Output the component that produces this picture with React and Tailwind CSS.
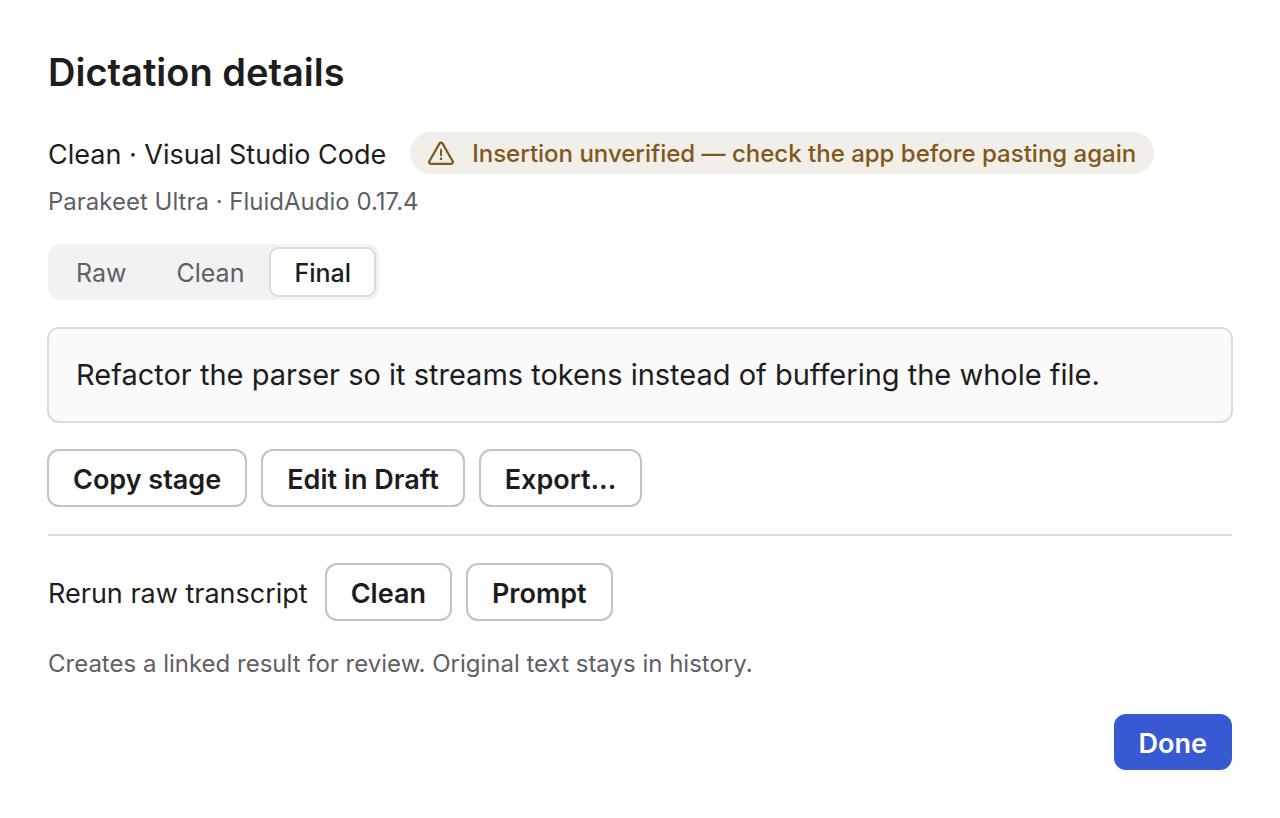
import React, { useState } from "react";

const outline =
  "h-[58px] rounded-[12px] border-2 border-[#c2c2c4] bg-white px-6 pt-1 text-[27px] font-semibold text-[#1d1d20]";

const stages = ["Raw", "Clean", "Final"];

export default function App() {
  const [stage, setStage] = useState("Final");
  return (
    <main className="bg-white px-12 py-12 font-['Inter',sans-serif] text-[#1d1d20]">
      <h1 className="text-[38px] leading-[48px] font-semibold">Dictation details</h1>

      <div className="mt-9 flex items-center gap-6">
        <p className="pt-[3px] text-[27px] leading-[39px]">Clean · Visual Studio Code</p>
        <p className="flex h-[42px] items-center gap-[18px] rounded-full bg-[#f2eee9] px-[18px] text-[24px] font-medium text-[#80591a]">
          <svg className="size-[26px]" viewBox="0 0 26 26" fill="none" stroke="currentColor" strokeWidth="2.2" strokeLinecap="round" strokeLinejoin="round" aria-hidden="true">
            <path d="M11.4 3.6 1.5 21A1.7 1.7 0 0 0 3 23.8H23A1.7 1.7 0 0 0 24.5 21L14.6 3.6A1.9 1.9 0 0 0 11.4 3.6Z" />
            <path d="M13 9.8V15.2" strokeWidth="2" />
            <circle cx="13" cy="18.9" r="1.3" fill="currentColor" stroke="none" />
          </svg>
          <span className="pt-0.5">Insertion unverified — check the app before pasting again</span>
        </p>
      </div>
      <p className="mt-3 text-[24px] leading-8 text-[#5f5f66]">Parakeet Ultra · FluidAudio 0.17.4</p>

      <div role="group" aria-label="Stage" className="mt-[26px] flex h-14 w-fit items-center rounded-[12px] bg-[#f2f2f2] px-[3px]">
        {stages.map((name) => (
          <button
            key={name}
            type="button"
            aria-pressed={stage === name}
            onClick={() => setStage(name)}
            className={
              "h-[50px] rounded-[9px] border-2 px-[23px] pt-[3px] text-[25px] " +
              (stage === name ? "border-[#dadcde] bg-white font-medium text-[#1d1d20]" : "border-transparent text-[#5f5f66]")
            }
          >
            {name}
          </button>
        ))}
      </div>

      <p className="-mx-px mt-[27px] rounded-[12px] border-2 border-[#dadcde] bg-[#fafafa] px-[27px] py-6 text-[29px] leading-[44px]">
        Refactor the parser so it streams tokens instead of buffering the whole file.
      </p>

      <div className="-mx-px mt-[26px] flex gap-[14px]">
        <button type="button" className={outline}>Copy stage</button>
        <button type="button" className={outline}>Edit in Draft</button>
        <button type="button" className={outline}>Export...</button>
      </div>

      <hr className="mt-[27px] border-t-2 border-[#dbdbe0]" />

      <div className="mt-[27px] flex items-center gap-[14px]">
        <p className="pt-1 pr-[3px] text-[27px]">Rerun raw transcript</p>
        <button type="button" className={outline}>Clean</button>
        <button type="button" className={outline}>Prompt</button>
      </div>
      <p className="mt-[27px] text-[24px] leading-8 text-[#5f5f66]">
        Creates a linked result for review. Original text stays in history.
      </p>

      <div className="mt-[34px] flex justify-end">
        <button type="button" className="h-14 rounded-[12px] bg-[#375ad3] px-[25px] pt-1 text-[27px] font-semibold text-white">Done</button>
      </div>
    </main>
  );
}
